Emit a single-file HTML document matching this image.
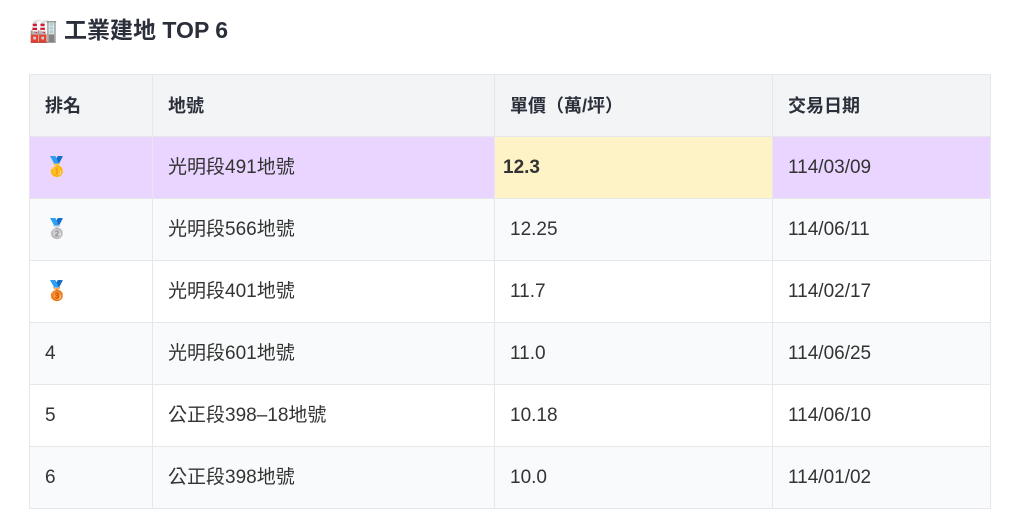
<!DOCTYPE html>
<html><head><meta charset="utf-8"><style>
body{margin:0;background:#fff;font-family:"Liberation Sans","Noto Sans CJK TC",sans-serif;color:#333;}
h2{position:absolute;left:29px;top:15px;margin:0;font-size:23px;font-weight:bold;color:#2a2f3a;line-height:30px;white-space:nowrap;}
table{position:absolute;left:29px;top:74px;border-collapse:collapse;width:961px;font-size:19px;table-layout:fixed;}
td,th{border:1px solid #e5e7eb;height:61px;padding:0 0 0 15px;text-align:left;vertical-align:middle;line-height:24px;box-sizing:border-box;}
th{background:#f3f4f6;font-weight:bold;color:#2a2f3a;font-size:18px;}
tr.a td{background:#f9fafb}
tr.w td{background:#fff}
tr.f td{background:#e9d5ff}
tr.f td.p{background:#fef3c7;font-weight:bold;padding-left:8px}
td.q{padding-left:15px}
</style></head><body>
<h2>🏭 工業建地 TOP 6</h2>
<table>
<colgroup><col style="width:123px"><col style="width:342px"><col style="width:278px"><col style="width:218px"></colgroup>
<tr style="height:62px"><th>排名</th><th>地號</th><th>單價（萬/坪）</th><th>交易日期</th></tr>
<tr class="f" style="height:62px"><td>🥇</td><td>光明段491地號</td><td class="p">12.3</td><td>114/03/09</td></tr>
<tr class="a" style="height:62px"><td>🥈</td><td>光明段566地號</td><td class="q">12.25</td><td>114/06/11</td></tr>
<tr class="w" style="height:62px"><td>🥉</td><td>光明段401地號</td><td class="q">11.7</td><td>114/02/17</td></tr>
<tr class="a" style="height:62px"><td>4</td><td>光明段601地號</td><td class="q">11.0</td><td>114/06/25</td></tr>
<tr class="w" style="height:62px"><td>5</td><td>公正段398–18地號</td><td class="q">10.18</td><td>114/06/10</td></tr>
<tr class="a" style="height:62px"><td>6</td><td>公正段398地號</td><td class="q">10.0</td><td>114/01/02</td></tr>
</table>
</body></html>
